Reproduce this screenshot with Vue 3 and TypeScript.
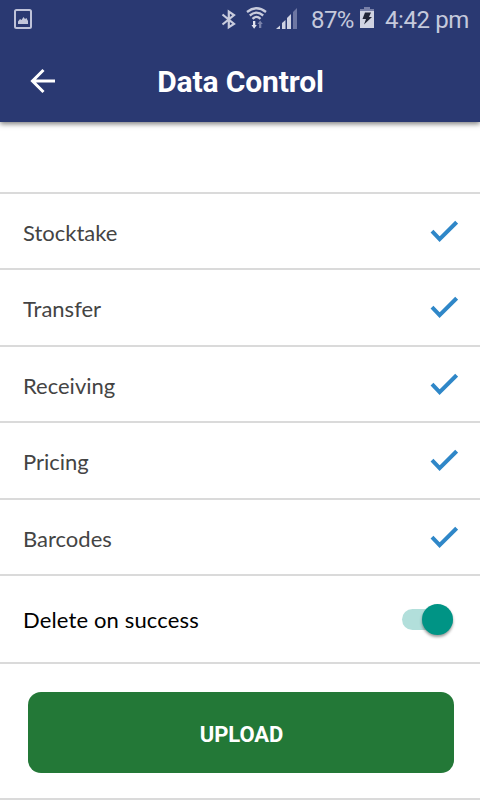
<script setup lang="ts">
import { ref } from 'vue'

interface Item {
  name: string
  tall: boolean
}

const items: Item[] = [
  { name: 'Stocktake', tall: false },
  { name: 'Transfer', tall: true },
  { name: 'Receiving', tall: false },
  { name: 'Pricing', tall: true },
  { name: 'Barcodes', tall: false },
]
const deleteOnSuccess = ref(true)
</script>

<template>
  <div class="screen">
    <header class="header">
      <div class="status">
        <svg class="picture" width="20" height="22" viewBox="0 0 20 22">
          <rect x="2" y="2" width="16" height="18" rx="1.5" fill="none" stroke="#bfc3d9" stroke-width="2" />
          <path d="M5 16v-2.500l2-2.500 1.500 1 2-3 1.500 2 1.500-1 1.500 3v3z" fill="#c3c7db" />
        </svg>
        <svg class="radios" width="80" height="30" viewBox="220 4 80 30">
          <path d="M222.500 14.500 L234 24 L228.800 27.300 V11.500 L234 15 L222.500 24.500" fill="none" stroke="#c9ccdd" stroke-width="2.200" />
          <g fill="none" stroke="#c9ccdd" stroke-width="2.300">
            <path d="M247 12 Q256.500 4.500 266 12" />
            <path d="M249.800 15.500 Q256.500 9.800 263.200 15.500" />
            <path d="M252.500 18.800 Q256.500 15 260.500 18.800" />
          </g>
          <path d="M253 21h2.300v4h1.500L254.100 28.800 251.500 25H253z" fill="#e2e4ee" />
          <path d="M259 28h2.300v-4h1.500L260.100 20.500 257.500 24H259z" fill="#7b83ab" />
          <g fill="#d0d3e2">
            <path d="M276 29l4-3.500V29z" />
            <path d="M282 23l3.500-3V29H282z" />
            <path d="M287 18l4-4V29h-4z" />
          </g>
          <path d="M293 12l4-4V29h-4z" fill="#6e77a3" />
        </svg>
        <span class="percent">87%</span>
        <svg class="battery" width="14" height="22" viewBox="0 0 14 22">
          <path d="M4 0h6v2h4v3H0V2h4z" fill="#7880a8" />
          <path d="M0 4h14v17H0z" fill="#d0d3e2" />
          <path d="M5 5.500h6L9 10h3L4 17.500 6 12H2.500z" fill="#202436" />
        </svg>
        <span class="time">4:42 pm</span>
      </div>
      <div class="toolbar">
        <button class="back" aria-label="Back">
          <svg width="26" height="26" viewBox="0 0 26 26">
            <path d="M25 13H3M13.500 2 2.500 13l11 11" fill="none" stroke="#fff" stroke-width="3" />
          </svg>
        </button>
        <h1 class="title">Data Control</h1>
      </div>
    </header>
    <div class="spacer"></div>
    <div v-for="item in items" :key="item.name" class="row" :class="{ tall: item.tall }">
      <span class="label">{{ item.name }}</span>
      <svg class="check" width="28" height="22" viewBox="0 0 28 22">
        <path d="M2 11.200 9.600 19.100 26.600 2.200" fill="none" stroke="#2f87c8" stroke-width="4" />
      </svg>
    </div>
    <div class="row option">
      <span class="label dark">Delete on success</span>
      <button class="switch" :class="{ on: deleteOnSuccess }" role="switch" :aria-checked="deleteOnSuccess" @click="deleteOnSuccess = !deleteOnSuccess">
        <span class="thumb"></span>
      </button>
    </div>
    <div class="actions">
      <button class="upload">UPLOAD</button>
    </div>
  </div>
</template>

<style>
body { margin: 0; background: #fff; }
</style>

<style scoped>
* { box-sizing: border-box; }
button { border: 0; padding: 0; background: none; }
svg { display: block; flex: none; }
.screen { width: 480px; height: 800px; overflow: hidden; background: #fff; display: flex; flex-direction: column; font-family: Lato, sans-serif; }
.header { flex: none; height: 122px; background: #2a3972; box-shadow: 0 2px 5px rgba(0, 0, 0, .5); }
.status { height: 40px; display: flex; align-items: flex-start; font-family: Roboto, sans-serif; font-size: 24px; line-height: 40px; color: #c5c9dc; white-space: nowrap; }
.picture { margin: 8px 0 0 13px; }
.radios { margin: 4px 0 0 187px; }
.percent { width: 49px; margin-left: 11px; letter-spacing: -.6px; }
.battery { margin-top: 7px; }
.time { margin-left: 11px; letter-spacing: -.4px; }
.toolbar { height: 82px; display: grid; grid-template-columns: 80px 1fr 80px; align-items: center; }
.back { justify-self: start; margin-left: 30px; }
.title { margin: 0; padding: 2px 0 0 1px; text-align: center; font: 700 30px/40px Roboto, sans-serif; color: #fff; letter-spacing: -.13px; }
.spacer { flex: none; height: 72px; border-bottom: 2px solid #dadada; }
.row { flex: none; height: 76px; border-bottom: 2px solid #dadada; padding: 0 22px 0 23px; display: flex; align-items: center; justify-content: space-between; }
.row.tall { height: 77px; padding-bottom: 1px; }
.label { padding-top: 4px; font-size: 22px; line-height: 28px; color: #444; }
.row.option { height: 88px; padding-right: 27px; }
.label.dark { color: #000; padding-top: 2px; letter-spacing: .14px; }
.switch { width: 51px; height: 31px; border-radius: 16px; display: flex; align-items: center; background: linear-gradient(#bbb, #bbb) center / 100% 21px no-repeat; }
.switch.on { justify-content: flex-end; height: 21px; border-radius: 11px; background: #b2dfdb; }
.thumb { flex: none; width: 31px; height: 31px; border-radius: 50%; background: #009485; box-shadow: 0 2px 3px rgba(0, 0, 0, .4); }
.actions { flex: none; height: 136px; padding: 28px 26px 0 28px; border-bottom: 2px solid #dadada; }
.upload { display: block; width: 100%; height: 81px; padding: 4px 0 0 1px; border-radius: 13px; background: #237837; color: #fff; font: 700 22px/28px Roboto, sans-serif; letter-spacing: -.1px; }
</style>
